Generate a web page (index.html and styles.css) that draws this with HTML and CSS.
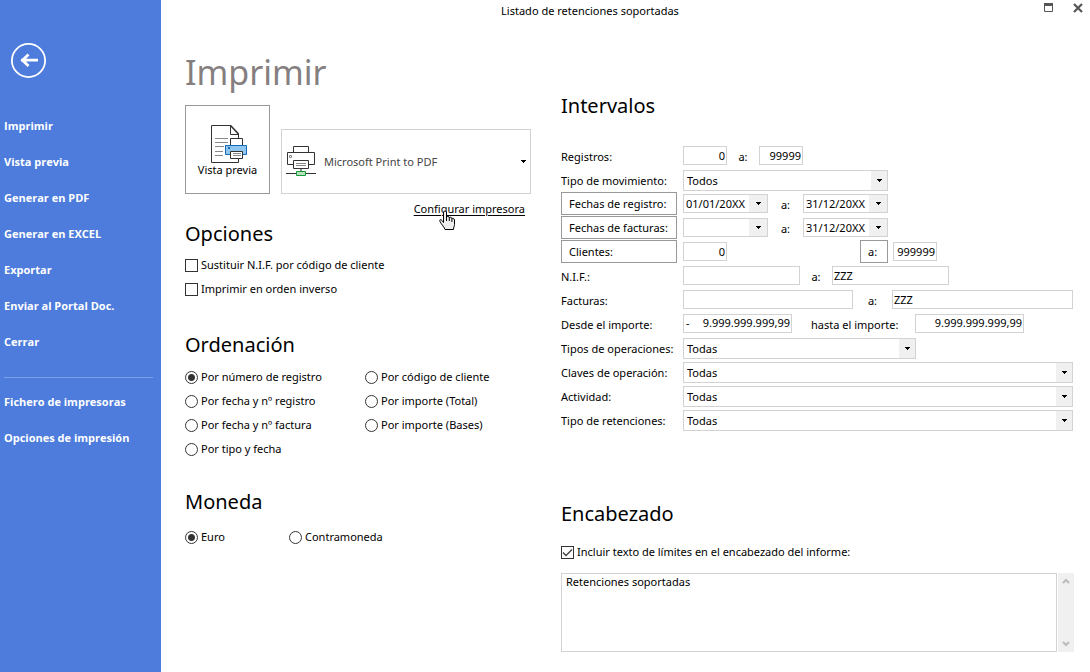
FILE: index.html
```html
<!DOCTYPE html>
<html lang="es">
<head>
<meta charset="utf-8">
<title>Listado de retenciones soportadas</title>
<link rel="stylesheet" href="styles.css">
</head>
<body>
<div class="window">
  <aside class="sidebar">
    <button class="back" type="button" aria-label="Volver">
      <svg width="35" height="35" viewBox="0 0 35 35"><circle cx="17.5" cy="17.5" r="16.6" fill="none" stroke="#fff" stroke-width="1.8"/><path d="M10 17.2H27M17.500 11.500L11.500 17.200L17.500 23" fill="none" stroke="#fff" stroke-width="2.800"/></svg>
    </button>
    <nav class="menu">
      <a href="#">Imprimir</a>
      <a href="#">Vista previa</a>
      <a href="#">Generar en PDF</a>
      <a href="#">Generar en EXCEL</a>
      <a href="#">Exportar</a>
      <a href="#">Enviar al Portal Doc.</a>
      <a href="#">Cerrar</a>
      <hr>
      <a href="#">Fichero de impresoras</a>
      <a href="#">Opciones de impresión</a>
    </nav>
  </aside>

  <div class="main">
    <header class="titlebar">
      <span class="caption">Listado de retenciones soportadas</span>
      <span class="controls">
        <button type="button" aria-label="Maximizar"><svg width="10" height="10" viewBox="0 0 10 10"><path d="M0.500 0.500H8.500V8.500H0.500Z" fill="#fff" stroke="#555"/><path d="M0 0H9V3H0Z" fill="#555"/></svg></button>
        <button type="button" aria-label="Cerrar"><svg width="10" height="10" viewBox="0 0 10 10"><path d="M1 1L9 9M9 1L1 9" stroke="#555" stroke-width="2.200"/></svg></button>
      </span>
    </header>

    <main class="content">
      <div class="left">
        <h1>Imprimir</h1>
        <div class="print-row">
          <button class="preview" type="button">
            <svg width="37" height="38" viewBox="0 0 37 38">
              <path d="M0.500 0.500H19.500L27.500 8.500V37.500H0.500Z" fill="#fff" stroke="#333"/>
              <path d="M19.500 0.500V9.500H27.500" fill="none" stroke="#333"/>
              <path d="M19.500 0.500L27.500 9" stroke="#333" stroke-width="1.600"/>
              <path d="M4 13.500H17M4 17.500H17M4 21.500H13M4 26.500H12M4 30.500H12" stroke="#888"/>
              <path d="M19.500 20V13.500H31.500V20" fill="#fff" stroke="#333"/>
              <path d="M14.500 20.500H35.500V29.500H14.500Z" fill="#8fc6f0" stroke="#1569b9"/>
              <path d="M17 22H19V24H17Z" fill="#1569b9"/>
              <path d="M19.500 26.500H31.500V33.500H19.500Z" fill="#fff" stroke="#333"/>
              <path d="M22 28.500H30M22 30.500H30" stroke="#888"/>
            </svg>
            <span>Vista previa</span>
          </button>
          <div class="printer">
            <svg width="30" height="31" viewBox="0 0 30 31">
              <path d="M7.500 18.500H1.500V6.500H28.500V18.500H22.500M7.500 6.500V0.500H22.500V6.500" fill="none" stroke="#333"/>
              <path d="M3.500 9.500H5.500V11.500H3.500Z" fill="none" stroke="#888"/>
              <path d="M7.500 14.500H22.500V22.500H7.500Z" fill="#fff" stroke="#333"/>
              <path d="M10 17.500H20M10 19.500H20" stroke="#888"/>
              <path d="M15 23V25" stroke="#888" stroke-width="2"/>
              <path d="M0 27.500H30" stroke="#333"/>
              <path d="M10.500 25.500H19.500V29.500H10.500Z" fill="#b9e0bd" stroke="#149b3d"/>
            </svg>
            <select aria-label="Impresora"><option>Microsoft Print to PDF</option></select>
          </div>
        </div>
        <div class="configure">
          <a href="#">Configurar impresora</a>
          <svg class="pointer" width="18" height="21" viewBox="0 0 18 21"><path d="M5.500 12.500V2C5.500 0.700 8.500 0.700 8.500 2V7.500C8.500 5.800 11.200 6 11.200 7.500V8C11.200 6.800 13.800 7 13.800 8.500V9C13.800 8 16.500 8 16.500 10V14.500C16.500 16.500 15.500 17 15.500 19.500H7C6.500 17.500 3.500 14.500 2 11.500C1 9.500 3 9 4 10.500Z" fill="#eee" stroke="#000"/><path d="M8.500 7V11M11.300 8V11M13.900 9V12" stroke="#000"/></svg>
        </div>

        <h2 class="first">Opciones</h2>
        <label class="check"><input type="checkbox">Sustituir N.I.F. por código de cliente</label>
        <label class="check"><input type="checkbox">Imprimir en orden inverso</label>

        <h2 class="order-title">Ordenación</h2>
        <div class="order">
          <label class="check"><input type="radio" name="orden" checked>Por número de registro</label>
          <label class="check"><input type="radio" name="orden">Por fecha y nº registro</label>
          <label class="check"><input type="radio" name="orden">Por fecha y nº factura</label>
          <label class="check"><input type="radio" name="orden">Por tipo y fecha</label>
          <label class="check"><input type="radio" name="orden">Por código de cliente</label>
          <label class="check"><input type="radio" name="orden">Por importe (Total)</label>
          <label class="check"><input type="radio" name="orden">Por importe (Bases)</label>
        </div>

        <h2>Moneda</h2>
        <div class="currency">
          <label class="check"><input type="radio" name="moneda" checked>Euro</label>
          <label class="check"><input type="radio" name="moneda">Contramoneda</label>
        </div>
      </div>

      <div class="right">
        <h2 class="first">Intervalos</h2>
        <div class="rows">
          <div class="row">
            <label class="name" for="reg1">Registros:</label>
            <input class="box w-num" id="reg1" value="0">
            <label class="to" for="reg2">a:</label>
            <input class="box w-num" id="reg2" value="99999">
          </div>
          <div class="row">
            <label class="name" for="mov">Tipo de movimiento:</label>
            <select class="combo w-mov" id="mov"><option>Todos</option></select>
          </div>
          <div class="row">
            <button class="name" type="button">Fechas de registro:</button>
            <span class="box date"><input id="fr1" aria-label="Fecha de registro inicial" value="01/01/20XX"><button class="drop" type="button" aria-label="Abrir calendario"></button></span>
            <label class="to wide" for="fr2">a:</label>
            <span class="box date"><input id="fr2" value="31/12/20XX"><button class="drop" type="button" aria-label="Abrir calendario"></button></span>
          </div>
          <div class="row">
            <button class="name" type="button">Fechas de facturas:</button>
            <span class="box date"><input id="ff1" aria-label="Fecha de factura inicial"><button class="drop" type="button" aria-label="Abrir calendario"></button></span>
            <label class="to wide" for="ff2">a:</label>
            <span class="box date"><input id="ff2" value="31/12/20XX"><button class="drop" type="button" aria-label="Abrir calendario"></button></span>
          </div>
          <div class="row">
            <button class="name" type="button">Clientes:</button>
            <input class="box w-num" aria-label="Cliente inicial" value="0">
            <button class="pick" type="button">a:</button>
            <input class="box w-num" aria-label="Cliente final" value="999999">
          </div>
          <div class="row">
            <label class="name" for="nif1">N.I.F.:</label>
            <input class="box w-nif" id="nif1">
            <label class="to" for="nif2">a:</label>
            <input class="box w-nif" id="nif2" value="ZZZ">
          </div>
          <div class="row">
            <label class="name" for="fac1">Facturas:</label>
            <input class="box w-fac" id="fac1">
            <label class="to wider" for="fac2">a:</label>
            <input class="box fill" id="fac2" value="ZZZ">
          </div>
          <div class="row">
            <label class="name" for="imp1">Desde el importe:</label>
            <span class="box amount"><span>-</span><input id="imp1" value="9.999.999.999,99"></span>
            <label class="until" for="imp2">hasta el importe:</label>
            <span class="box amount"><input id="imp2" value="9.999.999.999,99"></span>
          </div>
          <div class="row">
            <label class="name" for="ope">Tipos de operaciones:</label>
            <select class="combo w-ope" id="ope"><option>Todas</option></select>
          </div>
          <div class="row">
            <label class="name" for="cla">Claves de operación:</label>
            <select class="combo fill" id="cla"><option>Todas</option></select>
          </div>
          <div class="row">
            <label class="name" for="act">Actividad:</label>
            <select class="combo fill" id="act"><option>Todas</option></select>
          </div>
          <div class="row">
            <label class="name" for="ret">Tipo de retenciones:</label>
            <select class="combo fill" id="ret"><option>Todas</option></select>
          </div>
        </div>

        <h2 class="heading">Encabezado</h2>
        <label class="check"><input type="checkbox" checked>Incluir texto de límites en el encabezado del informe:</label>
        <div class="memo">
          <textarea aria-label="Texto del encabezado">Retenciones soportadas</textarea>
          <div class="scroll">
            <svg width="8" height="6" viewBox="0 0 8 6"><path d="M1 5L4 2L7 5" fill="none" stroke="#bbb" stroke-width="2"/></svg>
            <svg width="8" height="6" viewBox="0 0 8 6"><path d="M1 1L4 4L7 1" fill="none" stroke="#bbb" stroke-width="2"/></svg>
          </div>
        </div>
      </div>
    </main>
  </div>
</div>
</body>
</html>
```

FILE: styles.css
```css
:root {
  --line: #d3d3d3;
  --arrow: url("data:image/svg+xml,%3Csvg xmlns='http://www.w3.org/2000/svg' width='5' height='3'%3E%3Cpath d='M0 0H5V1H4V2H3V3H2V2H1V1H0Z'/%3E%3C/svg%3E");
}

* {
  box-sizing: border-box;
}

body {
  margin: 0;
  background: #fff;
  color: #000;
  font: 11px/16px "Noto Sans", "Open Sans", sans-serif;
}

button,
input,
select,
textarea {
  margin: 0;
  padding: 0;
  border: 0;
  border-radius: 0;
  background: none;
  color: inherit;
  font: inherit;
  outline: 0;
}

svg {
  display: block;
}

.window {
  display: grid;
  grid-template-columns: 161px 1fr;
  min-height: 100vh;
}

.sidebar {
  padding: 43px 8px 0 4px;
  background: #4d7cdc;
  color: #fff;
}

.back {
  display: block;
  margin: 0 0 30px 7px;
}

.menu {
  display: flex;
  flex-direction: column;
}

.menu a {
  color: inherit;
  font: bold 11px/36px "Open Sans", sans-serif;
  text-decoration: none;
}

.menu hr {
  width: 100%;
  margin: 17px 0 6px;
  border: 0;
  border-top: 1px solid #7da2ea;
}

.titlebar {
  display: flex;
  height: 22px;
}

.caption {
  flex: 1;
  line-height: 22px;
  text-align: center;
}

.controls {
  display: flex;
  justify-content: flex-end;
  align-items: flex-start;
  gap: 19px;
  width: 71px;
  padding: 3px 7px 0 0;
}

.content {
  display: grid;
  grid-template-columns: 346px 1fr;
  gap: 30px;
  padding: 0 17px 20px 24px;
}

h1 {
  margin: 24px 0 7px;
  color: #857f7f;
  font-size: 34px;
  font-weight: 400;
  line-height: 52px;
}

h2 {
  margin: 27px 0 6px;
  font-size: 20px;
  font-weight: 400;
  line-height: 28px;
}

.print-row {
  display: flex;
  align-items: flex-end;
  gap: 11px;
}

.preview {
  display: flex;
  flex-direction: column;
  align-items: center;
  width: 85px;
  height: 89px;
  padding-top: 19px;
  border: 1px solid #999;
}

.preview svg {
  margin-left: 4px;
}

.preview span {
  line-height: 14px;
}

.printer {
  display: flex;
  flex: 1;
  align-items: center;
  gap: 8px;
  height: 65px;
  padding: 0 4px;
  border: 1px solid var(--line);
}

.printer select {
  flex: 1;
  appearance: none;
  height: 30px;
  background: var(--arrow) no-repeat right center;
  color: #444;
}

.configure {
  position: relative;
  margin-top: 7px;
  padding-right: 6px;
  text-align: right;
}

.configure a {
  color: #000;
  text-underline-offset: 2px;
}

.pointer {
  position: absolute;
  top: 9px;
  right: 75px;
}

.left .first {
  margin: 3px 0 5px;
}

.order-title {
  margin-top: 30px;
}

.check {
  display: flex;
  align-items: center;
  gap: 3px;
  height: 24px;
}

.check input {
  appearance: none;
  width: 13px;
  height: 13px;
  border: 1px solid #333;
}

.check input[type="radio"] {
  border-radius: 50%;
}

.check input[type="radio"]:checked {
  background: radial-gradient(circle, #333 3px, transparent 4px);
}

.check input[type="checkbox"]:checked {
  background: url("data:image/svg+xml,%3Csvg xmlns='http://www.w3.org/2000/svg' width='11' height='11'%3E%3Cpath d='M1 5.500L4 8.500L10 2.500' fill='none' stroke='%23444' stroke-width='1.400'/%3E%3C/svg%3E");
}

.order {
  display: grid;
  grid-template-rows: repeat(4, 24px);
  grid-template-columns: 180px 1fr;
  grid-auto-flow: column;
}

.currency {
  display: grid;
  grid-template-columns: 104px 1fr;
  margin-top: 9px;
}

.right .first {
  margin: 70px 0 24px;
}

.rows {
  display: grid;
  gap: 1px;
}

.row {
  display: flex;
  align-items: center;
  height: 23px;
}

.name {
  flex: none;
  width: 116px;
  margin-right: 6px;
  padding-top: 2px;
  white-space: nowrap;
}

button.name,
.pick {
  height: 23px;
  padding: 0 7px;
  border: 1px solid #999;
  text-align: left;
}

.pick {
  width: 28px;
  margin: 0 5px 0 133px;
}

.box {
  height: 19px;
  padding: 0 1px 1px;
  border: 1px solid var(--line);
}

.w-num {
  width: 44px;
  text-align: right;
}

.w-nif {
  width: 117px;
}

.w-fac {
  width: 170px;
}

.fill {
  flex: 1;
  min-width: 0;
}

.to {
  width: 32px;
  padding-top: 2px;
  text-align: center;
}

.wide {
  width: 35px;
}

.wider {
  width: 39px;
}

.until {
  width: 123px;
  padding: 2px 0 0 19px;
}

.date,
.amount {
  display: flex;
  width: 85px;
  padding: 0 0 0 2px;
}

.date input,
.amount input {
  flex: 1;
  min-width: 0;
}

.drop {
  width: 18px;
  background: #f0f0f0 var(--arrow) no-repeat center;
}

.amount {
  width: 109px;
  padding: 0 1px 1px 2px;
}

.amount input {
  text-align: right;
}

.combo {
  align-self: flex-end;
  appearance: none;
  height: 21px;
  padding: 0 20px 0 3px;
  border: 1px solid var(--line);
  background: var(--arrow) no-repeat right 5px center, linear-gradient(#f0f0f0, #f0f0f0) no-repeat right / 16px 100%;
}

.w-mov {
  width: 205px;
}

.w-ope {
  width: 233px;
}

.right .heading {
  margin: 69px 0 12px;
}

.memo {
  display: flex;
  gap: 1px;
  height: 79px;
  margin: 9px -1px 0 0;
}

.memo textarea {
  flex: 1;
  padding: 0 4px;
  border: 1px solid var(--line);
  resize: none;
}

.scroll {
  display: flex;
  flex-direction: column;
  align-items: center;
  justify-content: space-between;
  width: 16px;
  padding: 5px 0;
  background: #f0f0f0;
}
```
